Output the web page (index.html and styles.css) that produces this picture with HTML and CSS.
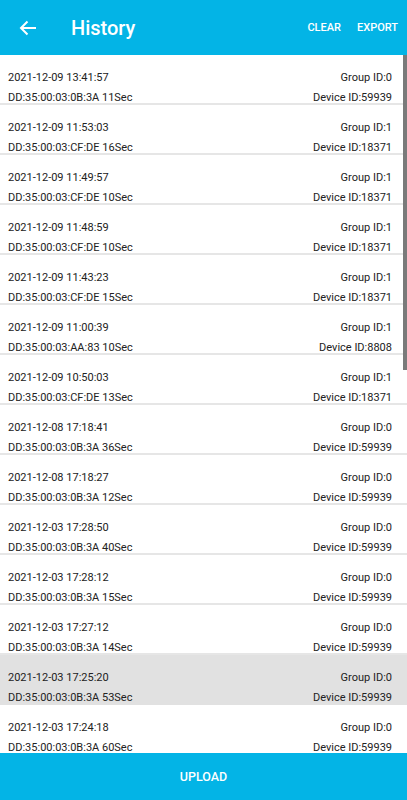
FILE: index.html
```html
<!DOCTYPE html>
<html>
<head>
    <title>History</title>
    <link rel="stylesheet" href="styles.css">
</head>
<body>
    <div class="app">
        <div class="toolbar">
            <svg class="back" width="18" height="16" viewBox="0 0 18 16"><path d="M17 8H2M8.5 1.5L2 8l6.5 6.5" fill="none" stroke="#fff" stroke-width="2"/></svg>
            <div class="title">History</div>
            <div class="action">CLEAR</div>
            <div class="action">EXPORT</div>
        </div>
        <div class="list">
            <div class="row">
                <div class="line"><span>2021-12-09 13:41:57</span><span>Group ID:0</span></div>
                <div class="line"><span>DD:35:00:03:0B:3A 11Sec</span><span>Device ID:59939</span></div>
            </div>
            <div class="row">
                <div class="line"><span>2021-12-09 11:53:03</span><span>Group ID:1</span></div>
                <div class="line"><span>DD:35:00:03:CF:DE 16Sec</span><span>Device ID:18371</span></div>
            </div>
            <div class="row">
                <div class="line"><span>2021-12-09 11:49:57</span><span>Group ID:1</span></div>
                <div class="line"><span>DD:35:00:03:CF:DE 10Sec</span><span>Device ID:18371</span></div>
            </div>
            <div class="row">
                <div class="line"><span>2021-12-09 11:48:59</span><span>Group ID:1</span></div>
                <div class="line"><span>DD:35:00:03:CF:DE 10Sec</span><span>Device ID:18371</span></div>
            </div>
            <div class="row">
                <div class="line"><span>2021-12-09 11:43:23</span><span>Group ID:1</span></div>
                <div class="line"><span>DD:35:00:03:CF:DE 15Sec</span><span>Device ID:18371</span></div>
            </div>
            <div class="row">
                <div class="line"><span>2021-12-09 11:00:39</span><span>Group ID:1</span></div>
                <div class="line"><span>DD:35:00:03:AA:83 10Sec</span><span>Device ID:8808</span></div>
            </div>
            <div class="row">
                <div class="line"><span>2021-12-09 10:50:03</span><span>Group ID:1</span></div>
                <div class="line"><span>DD:35:00:03:CF:DE 13Sec</span><span>Device ID:18371</span></div>
            </div>
            <div class="row">
                <div class="line"><span>2021-12-08 17:18:41</span><span>Group ID:0</span></div>
                <div class="line"><span>DD:35:00:03:0B:3A 36Sec</span><span>Device ID:59939</span></div>
            </div>
            <div class="row">
                <div class="line"><span>2021-12-08 17:18:27</span><span>Group ID:0</span></div>
                <div class="line"><span>DD:35:00:03:0B:3A 12Sec</span><span>Device ID:59939</span></div>
            </div>
            <div class="row">
                <div class="line"><span>2021-12-03 17:28:50</span><span>Group ID:0</span></div>
                <div class="line"><span>DD:35:00:03:0B:3A 40Sec</span><span>Device ID:59939</span></div>
            </div>
            <div class="row">
                <div class="line"><span>2021-12-03 17:28:12</span><span>Group ID:0</span></div>
                <div class="line"><span>DD:35:00:03:0B:3A 15Sec</span><span>Device ID:59939</span></div>
            </div>
            <div class="row">
                <div class="line"><span>2021-12-03 17:27:12</span><span>Group ID:0</span></div>
                <div class="line"><span>DD:35:00:03:0B:3A 14Sec</span><span>Device ID:59939</span></div>
            </div>
            <div class="row selected">
                <div class="line"><span>2021-12-03 17:25:20</span><span>Group ID:0</span></div>
                <div class="line"><span>DD:35:00:03:0B:3A 53Sec</span><span>Device ID:59939</span></div>
            </div>
            <div class="row">
                <div class="line"><span>2021-12-03 17:24:18</span><span>Group ID:0</span></div>
                <div class="line"><span>DD:35:00:03:0B:3A 60Sec</span><span>Device ID:59939</span></div>
            </div>
            <div class="scrollbar"></div>
        </div>
        <div class="upload">UPLOAD</div>
    </div>
</body>
</html>
```

FILE: styles.css
```css
body {
    margin: 0;
    font-family: Roboto, "Liberation Sans", sans-serif;
    background: #fff;
}
.app {
    display: flex;
    flex-direction: column;
    height: 800px;
    width: 407px;
    overflow: hidden;
}
.toolbar {
    background-color: #03b4e6;
    height: 55px;
    display: flex;
    align-items: center;
    color: #fff;
    flex-shrink: 0;
}
.back {
    margin-left: 19px;
    margin-top: 1px;
}
.title {
    font-size: 20px;
    font-weight: 500;
    margin-left: 34px;
    flex: 1;
}
.action {
    font-size: 11px;
    font-weight: 500;
    margin-right: 16px;
}
.action:last-child {
    margin-right: 9px;
}
.list {
    flex: 1;
    position: relative;
    overflow: hidden;
}
.row {
    border-bottom: 2px solid #e6e6e6;
    padding: 13px 15px 0 8px;
    height: 35px;
}
.row.selected {
    background-color: #e1e1e1;
    border-bottom-color: #e1e1e1;
}
.line {
    display: flex;
    justify-content: space-between;
    font-size: 11px;
    color: #222;
    height: 20px;
    line-height: 20px;
}
.scrollbar {
    position: absolute;
    right: 0;
    top: 0;
    width: 4px;
    height: 315px;
    background-color: #7a7a7a;
}
.upload {
    background-color: #03b4e6;
    height: 47px;
    flex-shrink: 0;
    color: #fff;
    font-size: 12.5px;
    font-weight: 500;
    display: flex;
    align-items: center;
    justify-content: center;
}
```
